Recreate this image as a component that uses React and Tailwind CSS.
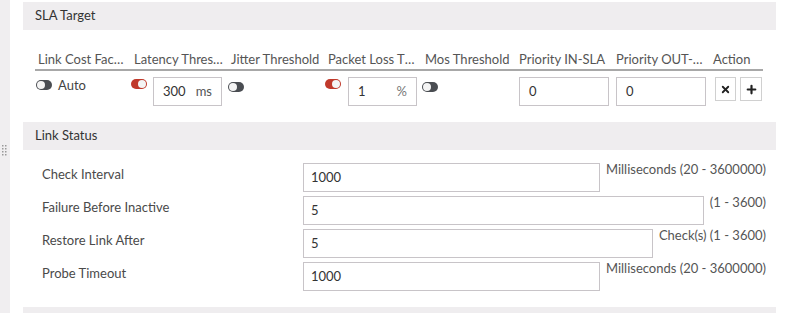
import { X, Plus } from 'lucide-react'

const font = { fontFamily: 'Lato, "Noto Sans", sans-serif' }

function Toggle({ on }) {
  return (
    <span
      className={`inline-flex h-[10px] w-[16px] items-center rounded-full px-[1px] ${
        on ? 'justify-end bg-[#c0392b]' : 'justify-start bg-[#4a4d52]'
      }`}
    >
      <span className="h-[8px] w-[8px] rounded-full bg-[#f4f4f4]" />
    </span>
  )
}

function SectionHeader({ title }) {
  return (
    <div className="flex h-[28px] items-center bg-[#efedef] pl-[12px] text-[13px] text-[#333]">
      {title}
    </div>
  )
}

const columns = [
  ['Link Cost Factor', 'w-[96px]'],
  ['Latency Threshold', 'w-[97px]'],
  ['Jitter Threshold', 'w-[97px]'],
  ['Packet Loss Threshold', 'w-[97px]'],
  ['Mos Threshold', 'w-[94px]'],
  ['Priority IN-SLA', 'w-[97px]'],
  ['Priority OUT-SLA', 'w-[97px]'],
  ['Action', 'flex-1'],
]

const statusRows = [
  { label: 'Check Interval', value: '1000', hint: 'Milliseconds (20 - 3600000)' },
  { label: 'Failure Before Inactive', value: '5', hint: '(1 - 3600)' },
  { label: 'Restore Link After', value: '5', hint: 'Check(s) (1 - 3600)' },
  { label: 'Probe Timeout', value: '1000', hint: 'Milliseconds (20 - 3600000)' },
]

export default function App() {
  return (
    <div className="flex h-[313px] w-[787px] overflow-hidden bg-white" style={font}>
      {/* barra lateral con el asa */}
      <div className="flex w-[10px] shrink-0 flex-col bg-[#f0eef0] pt-[145px] pl-[2px]">
        <svg width="6" height="11" viewBox="0 0 6 11">
          {[0, 3, 6, 9].map((y) => (
            <g key={y} fill="#9a9a9a">
              <rect x="0" y={y} width="1.5" height="1.5" />
              <rect x="3" y={y} width="1.5" height="1.5" />
            </g>
          ))}
        </svg>
      </div>

      <div className="min-w-0 flex-1 pt-[2px] pl-[13px] pr-[11px]">
        <SectionHeader title="SLA Target" />

        {/* tabla SLA */}
        <div className="mt-[21px] ml-[12px] w-[728px]">
          <div className="flex h-[20px] items-center border-b-2 border-[#a8a8a8] text-[13px] text-[#555]">
            {columns.map(([name, w]) => (
              <div key={name} className={`${w} min-w-0 truncate pl-[3px] pr-[4px] whitespace-nowrap`}>
                {name}
              </div>
            ))}
          </div>
          <div className="flex pt-[6px] text-[13px] text-[#444]">
            <div className="flex w-[96px] items-start gap-[6px] pl-[1px]">
              <span className="mt-[3px] inline-flex"><Toggle /></span>
              <span className="leading-[16px]">Auto</span>
            </div>
            <div className="flex w-[97px] items-start gap-[6px]">
              <span className="mt-[2px] inline-flex"><Toggle on /></span>
              <div className="flex h-[29px] w-[69px] items-center justify-between border border-[#c8c4c8] px-[9px] text-[#333]">
                <span>300</span>
                <span className="text-[#555]">ms</span>
              </div>
            </div>
            <div className="w-[97px]">
              <span className="mt-[2px] inline-flex"><Toggle /></span>
            </div>
            <div className="flex w-[97px] items-start gap-[7px]">
              <span className="mt-[2px] inline-flex"><Toggle on /></span>
              <div className="flex h-[29px] w-[69px] items-center justify-between border border-[#c8c4c8] px-[9px] text-[#333]">
                <span>1</span>
                <span className="text-[#777]">%</span>
              </div>
            </div>
            <div className="w-[94px]">
              <span className="mt-[2px] inline-flex"><Toggle /></span>
            </div>
            <div className="w-[97px] pl-[3px]">
              <div className="flex h-[29px] w-[90px] items-center border border-[#c8c4c8] px-[9px] text-[#333]">0</div>
            </div>
            <div className="w-[97px] pl-[3px]">
              <div className="flex h-[29px] w-[90px] items-center border border-[#c8c4c8] px-[9px] text-[#333]">0</div>
            </div>
            <div className="flex flex-1 gap-[4px] pl-[5px]">
              <button className="flex h-[24px] w-[21px] items-center justify-center border border-[#d0d0d0] bg-white">
                <X size={11} strokeWidth={4} color="#222" />
              </button>
              <button className="flex h-[24px] w-[22px] items-center justify-center border border-[#d0d0d0] bg-white">
                <Plus size={13} strokeWidth={4} color="#222" />
              </button>
            </div>
          </div>
        </div>

        <div className="mt-[16px]">
          <SectionHeader title="Link Status" />
        </div>

        {/* estado del enlace */}
        <div className="mt-[13px] flex flex-col gap-[4px] pl-[19px] pr-[10px] text-[13px]">
          {statusRows.map((r) => (
            <div key={r.label} className="flex items-start">
              <div className="mt-[2px] w-[261px] shrink-0 leading-[18px] text-[#4a4a4a]">{r.label}</div>
              <div className="flex h-[29px] flex-1 items-center border border-[#c8c4c8] px-[7px] text-[#333]">
                {r.value}
              </div>
              <div className="ml-[6px] mt-[-3px] whitespace-nowrap leading-[18px] text-[#555]">{r.hint}</div>
            </div>
          ))}
        </div>

        <div className="mt-[16px] h-[20px] bg-[#efedef]" />
      </div>
    </div>
  )
}
